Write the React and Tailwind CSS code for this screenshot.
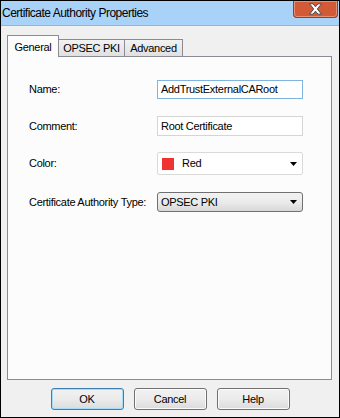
const Field = ({ label, children, className }) => (
	<div className={`flex items-center ${className}`}>
		<div className="w-[149px] pl-[21px] whitespace-nowrap">{label}</div>
		{children}
	</div>
);

const Arrow = () => (
	<svg width="7" height="4" viewBox="0 0 7 4" className="mr-[5px]">
		<path d="M0 0h7L3.5 4z" fill="#000" />
	</svg>
);

const Button = ({ children, primary }) => (
	<button
		className={`w-[73px] h-[22px] rounded-[3px] border text-black bg-gradient-to-b from-[#f2f2f2] via-[#ebebeb] to-[#dcdcdc] ${
			primary ? "border-[#3c7fb1] shadow-[inset_0_0_0_1px_#a6dcf7]" : "border-[#707070] shadow-[inset_0_0_0_1px_#fbfbfb]"
		}`}
	>
		{children}
	</button>
);

export default function App() {
	return (
		<div className="w-[340px] h-[418px] border border-black bg-[#f0f0f0] flex flex-col font-['Liberation_Sans',Arial,sans-serif] text-[11px] tracking-[-0.3px] text-black">
			{/* title bar */}
			<div className="h-[25px] bg-[#a9d2f8] border-b border-[#8fb6dc] flex items-start justify-between">
				<span className="pl-[1px] pt-[5px] text-[12px] tracking-[-0.5px] leading-[14px]">Certificate Authority Properties</span>
				<div className="w-[45px] h-[17px] mr-[1px] rounded-b-[4px] bg-[#d35a37] border border-t-0 border-[#9c3a22] shadow-[inset_0_0_0_1px_#e8906f] flex items-center justify-center">
					<svg width="15" height="12" viewBox="0 0 15 12">
						<path
							d="M1.5 0.8h3.5l2.5 3 2.5-3h3.5l-4.2 5.2 4.2 5.2h-3.5l-2.5-3-2.5 3h-3.5l4.2-5.2z"
							fill="#fff"
							stroke="#4a4a4a"
							strokeWidth="1"
							strokeLinejoin="round"
						/>
					</svg>
				</div>
			</div>

			{/* tabs */}
			<div className="ml-[6px] mt-[9px] flex items-end">
				<div className="relative z-10 -mb-px h-[22px] w-[52px] bg-[#fcfcfc] border border-b-0 border-[#898c95] flex items-start justify-center pt-[4px] leading-[14px]">
					General
				</div>
				<div className="h-[17px] w-[67px] -ml-px bg-gradient-to-b from-[#f2f2f2] to-[#e0e0e0] border border-b-0 border-[#898c95] flex items-center justify-center leading-[14px]">
					OPSEC PKI
				</div>
				<div className="h-[17px] w-[59px] -ml-px bg-gradient-to-b from-[#f2f2f2] to-[#e0e0e0] border border-b-0 border-[#898c95] flex items-center justify-center leading-[14px]">
					Advanced
				</div>
			</div>

			{/* panel */}
			<div className="ml-[6px] w-[325px] h-[324px] bg-[#fcfcfc] border border-[#898c95] flex flex-col">
				<Field label="Name:" className="mt-[23px] h-[19px]">
					<div className="w-[146px] h-[19px] border border-[#7fb3e0] bg-white px-[3px] leading-[17px]">
						AddTrustExternalCARoot
					</div>
				</Field>
				<Field label="Comment:" className="mt-[17px] h-[20px]">
					<div className="w-[146px] h-[20px] border border-[#d5d5d5] bg-white px-[3px] leading-[18px]">
						Root Certificate
					</div>
				</Field>
				<Field label="Color:" className="mt-[16px] h-[23px]">
					<div className="w-[146px] h-[23px] border border-[#dadada] rounded-[2px] bg-white flex items-center">
						<span className="ml-[4px] w-[12px] h-[12px] bg-[#f03232]" />
						<span className="ml-[8px] flex-1">Red</span>
						<Arrow />
					</div>
				</Field>
				<Field label="Certificate Authority Type:" className="mt-[17px] h-[20px]">
					<div className="w-[146px] h-[20px] border border-[#707070] rounded-[3px] bg-gradient-to-b from-[#f2f2f2] via-[#ebebeb] to-[#d8d8d8] flex items-center">
						<span className="ml-[3px] flex-1">OPSEC PKI</span>
						<Arrow />
					</div>
				</Field>
			</div>

			{/* buttons */}
			<div className="mt-[8px] flex justify-center gap-[10px]">
				<Button primary>OK</Button>
				<Button>Cancel</Button>
				<Button>Help</Button>
			</div>
		</div>
	);
}
